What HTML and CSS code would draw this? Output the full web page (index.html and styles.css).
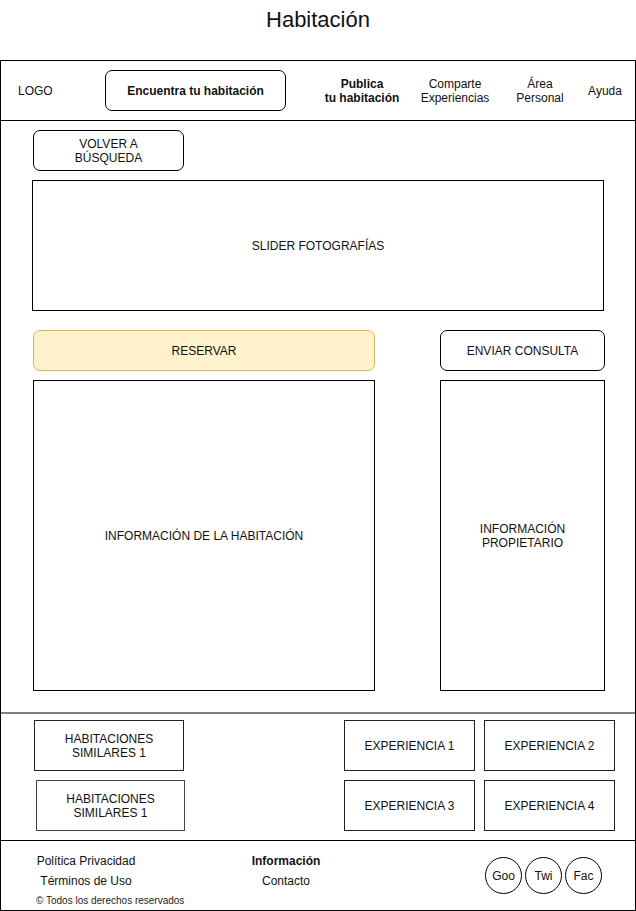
FILE: index.html
```html
<!DOCTYPE html>
<html lang="es">
<head>
<meta charset="utf-8">
<title>Habitación</title>
<link rel="stylesheet" href="styles.css">
</head>
<body>
<h1 class="page-title">Habitación</h1>
<div class="frame">
  <header class="topbar">
    <div class="logo">LOGO</div>
    <div class="btn btn-find">Encuentra tu habitación</div>
    <div class="nav-item nav-publish">Publica<br>tu habitación</div>
    <div class="nav-item nav-share">Comparte<br>Experiencias</div>
    <div class="nav-item nav-area">Área<br>Personal</div>
    <div class="nav-item nav-help">Ayuda</div>
  </header>
  <main class="main">
    <div class="btn btn-back">VOLVER A<br>BÚSQUEDA</div>
    <div class="box slider">SLIDER FOTOGRAFÍAS</div>
    <div class="row row-actions">
      <div class="btn btn-book">RESERVAR</div>
      <div class="btn btn-ask">ENVIAR CONSULTA</div>
    </div>
    <div class="row row-info">
      <div class="box info-room">INFORMACIÓN DE LA HABITACIÓN</div>
      <div class="box info-owner">INFORMACIÓN<br>PROPIETARIO</div>
    </div>
  </main>
  <section class="related">
    <div class="similar">
      <div class="card card-sim">HABITACIONES<br>SIMILARES 1</div>
      <div class="card card-sim card-sim2">HABITACIONES<br>SIMILARES 1</div>
    </div>
    <div class="experiences">
      <div class="card">EXPERIENCIA 1</div>
      <div class="card">EXPERIENCIA 2</div>
      <div class="card">EXPERIENCIA 3</div>
      <div class="card">EXPERIENCIA 4</div>
    </div>
  </section>
  <footer class="footer">
    <div class="foot-left">
      <div class="foot-links">
        <div class="foot-line">Política Privacidad</div>
        <div class="foot-line">Términos de Uso</div>
      </div>
      <div class="copyright">© Todos los derechos reservados</div>
    </div>
    <div class="foot-mid">
      <div class="foot-line foot-bold">Información</div>
      <div class="foot-line">Contacto</div>
    </div>
    <div class="social">
      <div class="circle">Goo</div>
      <div class="circle">Twi</div>
      <div class="circle">Fac</div>
    </div>
  </footer>
</div>
</body>
</html>
```
FILE: styles.css
```css
* { box-sizing: border-box; }
html, body { margin: 0; padding: 0; background: #fff; }
body {
  font-family: "Liberation Sans", Arial, Helvetica, sans-serif;
  font-size: 12px;
  color: #111;
  width: 636px;
}
.page-title {
  margin: 0;
  height: 60px;
  padding-top: 7px;
  font-size: 22px;
  line-height: 26px;
  font-weight: normal;
  text-align: center;
  color: #111;
}
.frame {
  width: 636px;
  height: 851px;
  border: 1px solid #000;
}
.topbar {
  height: 60px;
  border-bottom: 1px solid #000;
  display: flex;
  align-items: center;
  padding-left: 17px;
}
.logo { width: 87px; line-height: 14px; }
.btn {
  display: flex;
  align-items: center;
  justify-content: center;
  text-align: center;
  border: 1px solid #000;
  border-radius: 7px;
  line-height: 14px;
  background: #fff;
}
.btn-find { width: 181px; height: 41px; font-weight: bold; }
.nav-item { text-align: center; line-height: 14px; }
.nav-publish { width: 92px; margin-left: 30px; font-weight: bold; }
.nav-share { width: 90px; margin-left: 2px; }
.nav-area { width: 70px; margin-left: 5px; }
.nav-help { width: 50px; margin-left: 5px; }

.main {
  height: 593px;
  border-bottom: 2px solid #808080;
  padding: 9px 0 0 32px;
}
.btn-back { width: 151px; height: 41px; }
.box {
  border: 1px solid #000;
  display: flex;
  align-items: center;
  justify-content: center;
  text-align: center;
  line-height: 14px;
}
.slider { width: 572px; height: 131px; margin-top: 9px; margin-left: -1px; }
.row { display: flex; gap: 65px; }
.row-actions { margin-top: 19px; }
.row-info { margin-top: 9px; }
.btn-book {
  width: 342px; height: 41px;
  background: #fff2cc;
  border-color: #d6b656;
}
.btn-ask { width: 165px; height: 41px; }
.info-room { width: 342px; height: 311px; }
.info-owner { width: 165px; height: 311px; }

.related {
  height: 127px;
  border-bottom: 1px solid #000;
  display: flex;
  padding: 6px 0 0 33px;
}
.similar { display: flex; flex-direction: column; gap: 9px; width: 152px; }
.card {
  border: 1px solid #222;
  height: 51px;
  display: flex;
  align-items: center;
  justify-content: center;
  text-align: center;
  line-height: 14px;
}
.card-sim { width: 150px; }
.card-sim2 { margin-left: 2px; width: 149px; border-color: #444; }
.experiences {
  margin-left: 158px;
  display: grid;
  grid-template-columns: 131px 131px;
  column-gap: 9px;
  row-gap: 9px;
  align-content: start;
}

.footer {
  height: 69px;
  display: flex;
  align-items: flex-start;
  padding: 10px 33px 0 35px;
}
.foot-left { width: 150px; }
.foot-links { width: 100px; text-align: center; }
.foot-line { line-height: 20px; }
.foot-bold { font-weight: bold; }
.copyright {
  margin-top: 4px;
  font-size: 10px;
  line-height: 12px;
  color: #222;
}
.foot-mid { width: 100px; margin-left: 50px; text-align: center; }
.social {
  margin-left: auto;
  margin-top: 6px;
  display: flex;
  gap: 3px;
}
.circle {
  width: 37px;
  height: 37px;
  border: 1px solid #000;
  border-radius: 50%;
  display: flex;
  align-items: center;
  justify-content: center;
}
```
